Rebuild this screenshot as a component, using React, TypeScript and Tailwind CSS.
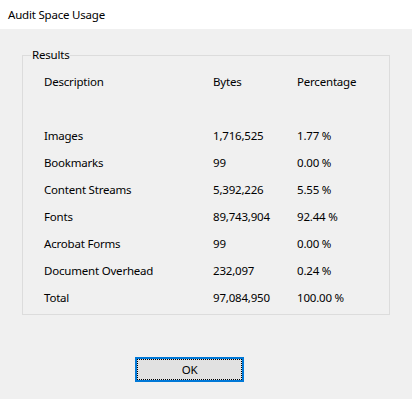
export default function App() {
  const rows: [string, string, string][] = [
    ["Images", "1,716,525", "1.77 %"],
    ["Bookmarks", "99", "0.00 %"],
    ["Content Streams", "5,392,226", "5.55 %"],
    ["Fonts", "89,743,904", "92.44 %"],
    ["Acrobat Forms", "99", "0.00 %"],
    ["Document Overhead", "232,097", "0.24 %"],
    ["Total", "97,084,950", "100.00 %"],
  ];
  return (
    <div
      className="w-[412px] h-[399px] text-[11.5px] tracking-[-0.2px] text-black bg-[#f0f0f0] flex flex-col"
      style={{ fontFamily: '"Noto Sans", "Open Sans", sans-serif' }}
    >
      <div className="h-[29px] bg-white flex items-center pl-[8px]">Audit Space Usage</div>
      <fieldset className="ml-[22px] mt-[17px] w-[368px] border border-[#dcdcdc]">
        <legend className="ml-[8px] px-[1px] leading-[18px]">Results</legend>
        <div className="pt-[4px] pb-[3px] pl-[21px] grid grid-cols-[169px_84px_1fr] auto-rows-[27px] items-center">
          <div>Description</div>
          <div>Bytes</div>
          <div>Percentage</div>
          <div className="col-span-3" />
          {rows.map(([a, b, c]) => (
            <div key={a} className="contents">
              <div>{a}</div>
              <div>{b}</div>
              <div>{c}</div>
            </div>
          ))}
        </div>
      </fieldset>
      <button className="ml-[135px] mt-[42px] w-[109px] h-[25px] border-2 border-[#0078d7] bg-[#e1e1e1] p-0">
        <div className="h-full w-full border border-dotted border-black flex items-center justify-center">OK</div>
      </button>
    </div>
  );
}
